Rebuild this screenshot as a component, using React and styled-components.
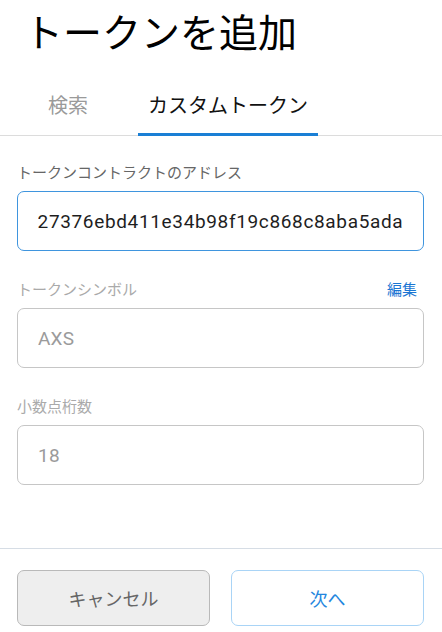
import React, { useLayoutEffect, useRef } from 'react'
import styled, { createGlobalStyle } from 'styled-components'

const GlobalStyle = createGlobalStyle`
  html, body {
    margin: 0;
    padding: 0;
    background: #fff;
  }
  body {
    font-family: Roboto, "Noto Sans CJK JP", sans-serif;
  }
`

const Page = styled.div`
  display: flex;
  flex-direction: column;
  width: 442px;
  height: 100vh;
  background: #fff;
`

const Title = styled.h1`
  margin: 5px 0 0;
  padding-left: 24px;
  font-family: "Noto Sans CJK JP", sans-serif;
  font-size: 39px;
  font-weight: 400;
  line-height: 50px;
  color: #000;
`

const TabBar = styled.div`
  display: flex;
  gap: 40px;
  margin-top: 24px;
  padding-left: 38px;
  border-bottom: 1px solid #dcdcdc;
`

const Tab = styled.div`
  padding: 0 10px 3px;
  height: 51px;
  display: flex;
  align-items: center;
  font-family: "Noto Sans CJK JP", sans-serif;
  font-size: 20px;
  color: ${({ active }) => (active ? '#111' : '#9a9a9a')};
  border-bottom: 3px solid ${({ active }) => (active ? '#1a7fd5' : 'transparent')};
  margin-bottom: -1px;
`

const Content = styled.div`
  flex: 1;
  display: flex;
  flex-direction: column;
  gap: 26px;
  padding: 24px 18px 0 17px;
`

const Field = styled.div`
  display: flex;
  flex-direction: column;
  gap: 9px;
`

const LabelRow = styled.div`
  display: flex;
  justify-content: space-between;
  align-items: center;
  height: 22px;
  padding-right: 7px;
`

const Label = styled.label`
  font-family: "Noto Sans CJK JP", sans-serif;
  font-size: 15px;
  color: ${({ muted }) => (muted ? '#aaaaaa' : '#666666')};
`

const EditLink = styled.a`
  font-family: "Noto Sans CJK JP", sans-serif;
  font-size: 15px;
  color: #1a76d3;
  text-decoration: none;
  cursor: pointer;
`

const TextInput = styled.input`
  box-sizing: border-box;
  width: 100%;
  height: 60px;
  padding: 0 20px;
  border: 1px solid ${({ focused }) => (focused ? '#3f95de' : '#c6c6c6')};
  border-radius: 7px;
  background: #fff;
  font-family: Roboto, sans-serif;
  font-size: 19px;
  letter-spacing: ${({ focused }) => (focused ? '0.65px' : '0.2px')};
  color: ${({ focused }) => (focused ? '#1e1e1e' : '#9b9b9b')};
  outline: none;

  &:disabled {
    background: #fff;
    color: #9b9b9b;
  }
`

const Footer = styled.div`
  display: flex;
  gap: 21px;
  padding: 21px 18px 6px 17px;
  border-top: 1px solid #d6dde5;
`

const Button = styled.button`
  flex: 1;
  height: 56px;
  border-radius: 7px;
  font-family: "Noto Sans CJK JP", sans-serif;
  font-size: 18px;
  cursor: pointer;
  border: 1px solid ${({ primary }) => (primary ? '#a9d4f6' : '#b9b9b9')};
  background: ${({ primary }) => (primary ? '#fff' : '#eeeeee')};
  color: ${({ primary }) => (primary ? '#2486de' : '#666')};
`

const ADDRESS = '0x3f2a8c127376ebd411e34b98f19c868c8aba5ada'

const AddressInput = () => {
  const ref = useRef(null)
  useLayoutEffect(() => {
    if (ref.current) ref.current.scrollLeft = ref.current.scrollWidth
  }, [])
  return <TextInput ref={ref} focused value={ADDRESS} readOnly />
}

export default function App() {
  return (
    <Page>
      <GlobalStyle />
      <Title>トークンを追加</Title>
      <TabBar>
        <Tab>検索</Tab>
        <Tab active>カスタムトークン</Tab>
      </TabBar>
      <Content>
        <Field>
          <LabelRow>
            <Label>トークンコントラクトのアドレス</Label>
          </LabelRow>
          <AddressInput />
        </Field>
        <Field>
          <LabelRow>
            <Label muted>トークンシンボル</Label>
            <EditLink>編集</EditLink>
          </LabelRow>
          <TextInput value="AXS" disabled readOnly />
        </Field>
        <Field>
          <LabelRow>
            <Label muted>小数点桁数</Label>
          </LabelRow>
          <TextInput value="18" disabled readOnly />
        </Field>
      </Content>
      <Footer>
        <Button>キャンセル</Button>
        <Button primary>次へ</Button>
      </Footer>
    </Page>
  )
}
